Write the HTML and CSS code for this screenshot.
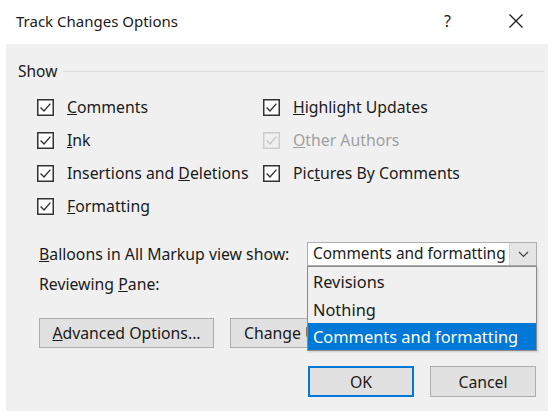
FILE: index.html
```html
<!DOCTYPE html>
<html>
<head>
<meta charset="utf-8">
<link rel="stylesheet" href="styles.css">
</head>
<body>
<div class="titlebar">
  <div class="title">Track Changes Options</div>
  <div class="help">?</div>
  <div class="close">
    <svg width="16" height="16" viewBox="0 0 16 16"><path d="M1.5 1.5 L14.5 14.5 M14.5 1.5 L1.5 14.5" stroke="#1a1a1a" stroke-width="1.3" fill="none"/></svg>
  </div>
</div>
<div class="panel">
  <div class="group-head"><span>Show</span><div class="rule"></div></div>
  <div class="checks">
    <div class="check"><svg class="cb" viewBox="0 0 17 17"><rect x="0.75" y="0.75" width="15.5" height="15.5" fill="#fff" stroke="#333" stroke-width="1.5"/><path d="M3.6 8.6 L7 12 L13.4 4.6" stroke="#333" stroke-width="1.4" fill="none"/></svg><span><u>C</u>omments</span></div>
    <div class="check"><svg class="cb" viewBox="0 0 17 17"><rect x="0.75" y="0.75" width="15.5" height="15.5" fill="#fff" stroke="#333" stroke-width="1.5"/><path d="M3.6 8.6 L7 12 L13.4 4.6" stroke="#333" stroke-width="1.4" fill="none"/></svg><span><u>H</u>ighlight Updates</span></div>
    <div class="check"><svg class="cb" viewBox="0 0 17 17"><rect x="0.75" y="0.75" width="15.5" height="15.5" fill="#fff" stroke="#333" stroke-width="1.5"/><path d="M3.6 8.6 L7 12 L13.4 4.6" stroke="#333" stroke-width="1.4" fill="none"/></svg><span><u>I</u>nk</span></div>
    <div class="check disabled"><svg class="cb" viewBox="0 0 17 17"><rect x="0.75" y="0.75" width="15.5" height="15.5" fill="#f0f0f0" stroke="#cccccc" stroke-width="1.5"/><path d="M3.6 8.6 L7 12 L13.4 4.6" stroke="#c4c4c4" stroke-width="1.4" fill="none"/></svg><span><u>O</u>ther Authors</span></div>
    <div class="check"><svg class="cb" viewBox="0 0 17 17"><rect x="0.75" y="0.75" width="15.5" height="15.5" fill="#fff" stroke="#333" stroke-width="1.5"/><path d="M3.6 8.6 L7 12 L13.4 4.6" stroke="#333" stroke-width="1.4" fill="none"/></svg><span>Insertions and <u>D</u>eletions</span></div>
    <div class="check"><svg class="cb" viewBox="0 0 17 17"><rect x="0.75" y="0.75" width="15.5" height="15.5" fill="#fff" stroke="#333" stroke-width="1.5"/><path d="M3.6 8.6 L7 12 L13.4 4.6" stroke="#333" stroke-width="1.4" fill="none"/></svg><span>Pic<u>t</u>ures By Comments</span></div>
    <div class="check"><svg class="cb" viewBox="0 0 17 17"><rect x="0.75" y="0.75" width="15.5" height="15.5" fill="#fff" stroke="#333" stroke-width="1.5"/><path d="M3.6 8.6 L7 12 L13.4 4.6" stroke="#333" stroke-width="1.4" fill="none"/></svg><span><u>F</u>ormatting</span></div>
  </div>
  <div class="field-row balloons">
    <span><u>B</u>alloons in All Markup view show:</span>
    <div class="select-wrap">
      <div class="select">
        <span class="select-text">Comments and formatting</span>
        <div class="select-btn"><svg width="11" height="7" viewBox="0 0 11 7"><path d="M1 1 L5.5 5.5 L10 1" stroke="#444" stroke-width="1.2" fill="none"/></svg></div>
      </div>
      <div class="listbox">
        <div class="opt">Revisions</div>
        <div class="opt">Nothing</div>
        <div class="opt selected">Comments and formatting</div>
      </div>
    </div>
  </div>
  <div class="field-row pane"><span>Reviewing <u>P</u>ane:</span></div>
  <div class="btn-row">
    <div class="btn"><u>A</u>dvanced Options...</div>
    <div class="btn change">Change User Name...</div>
  </div>
  <div class="dialog-btns">
    <div class="btn ok">OK</div>
    <div class="btn">Cancel</div>
  </div>
</div>
</body>
</html>
```
FILE: styles.css
```css
html, body {
  margin: 0;
  padding: 0;
  background: #ffffff;
  width: 553px;
  height: 416px;
  overflow: hidden;
}
body {
  font-family: "Noto Sans", "Open Sans", sans-serif;
  font-size: 15.8px;
  color: #1a1a1a;
}
.titlebar {
  height: 44px;
  display: flex;
  align-items: center;
  padding-left: 16px;
  box-sizing: border-box;
}
.title {
  flex: 1;
  font-size: 15px;
  padding-bottom: 2px;
}
.help {
  width: 16px;
  font-size: 16px;
  margin-right: 48px;
  padding-bottom: 2px;
}
.close {
  width: 16px;
  height: 16px;
  margin-right: 29px;
  margin-bottom: 2px;
}
.close svg { display: block; }
.panel {
  margin: 0 5px 0 6px;
  height: 367px;
  background: #f0f0f0;
  position: relative;
}
.group-head {
  display: flex;
  align-items: center;
  height: 20px;
  padding-top: 17px;
  padding-left: 12px;
  padding-right: 4px;
  font-size: 15.5px;
}
.group-head span { margin-right: 6px; }
.rule {
  flex: 1;
  height: 1px;
  background: #dcdcdc;
  margin-top: 1px;
}
.checks {
  display: grid;
  grid-template-columns: 226px 260px;
  grid-auto-rows: 33px;
  margin-top: 16px;
  padding-left: 31px;
}
.check {
  display: flex;
  align-items: flex-start;
  height: 20px;
}
.check span { line-height: 20px; white-space: nowrap; }
.cb {
  width: 17px;
  height: 17px;
  margin-top: 2px;
  margin-right: 13px;
  flex: none;
}
.check.disabled span { color: #a0a0a0; }
.field-row {
  display: flex;
  align-items: center;
  padding-left: 33px;
}
.balloons {
  margin-top: 13px;
  height: 24px;
}
.balloons > span { width: 268px; white-space: nowrap; }
.select-wrap {
  position: relative;
  width: 230px;
  height: 24px;
}
.select {
  display: flex;
  height: 24px;
  box-sizing: border-box;
  border: 1px solid #adadad;
  background: #ffffff;
}
.select-text {
  flex: 1;
  padding-left: 5px;
  line-height: 22px;
  font-size: 15.4px;
  white-space: nowrap;
  overflow: hidden;
}
.select-btn {
  width: 26px;
  background: #e5e5e5;
  display: flex;
  align-items: center;
  justify-content: center;
  border-left: 1px solid #d5d5d5;
}
.listbox {
  position: absolute;
  top: 24px;
  left: 0;
  width: 230px;
  box-sizing: border-box;
  border: 1px solid #8c8c8c;
  background: #f0f0f0;
  z-index: 5;
  box-shadow: 1px 1px 2px rgba(0,0,0,0.15);
}
.opt {
  height: 28px;
  line-height: 29px;
  padding-left: 5px;
  font-size: 16.4px;
  white-space: nowrap;
}
.opt.selected {
  background: #0078d7;
  color: #ffffff;
  height: 27px;
  line-height: 28px;
}
.pane {
  margin-top: 8px;
  height: 20px;
}
.btn-row {
  display: flex;
  gap: 16px;
  margin-top: 24px;
  padding-left: 33px;
}
.btn {
  height: 30px;
  box-sizing: border-box;
  border: 1px solid #adadad;
  background: #e1e1e1;
  display: flex;
  align-items: center;
  justify-content: center;
  white-space: nowrap;
}
.btn-row .btn { width: 175px; }
.btn.change { justify-content: flex-start; padding-left: 13px; overflow: hidden; }
.dialog-btns {
  display: flex;
  justify-content: flex-end;
  gap: 16px;
  margin-top: 18px;
  padding-right: 12px;
}
.dialog-btns .btn { width: 106px; height: 31px; }
.btn.ok { border: 2px solid #0078d7; }
```
